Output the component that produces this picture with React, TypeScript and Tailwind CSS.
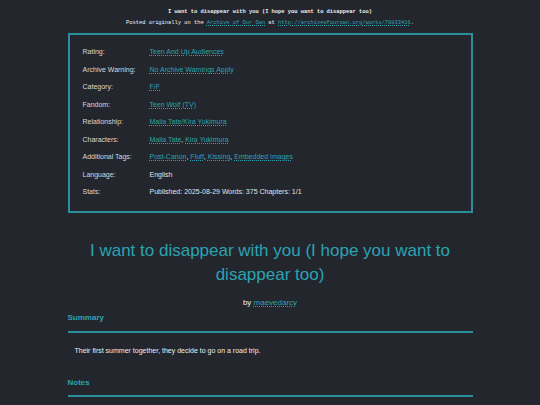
const TEAL = "text-[#2ba3b3]";

function Meta({ label, children }: { label: string; children: React.ReactNode }) {
  return (
    <>
      <dt className="text-[#d8d8d8]">{label}</dt>
      <dd className="text-[#e2e2e2]">{children}</dd>
    </>
  );
}

function Tag({ children }: { children: React.ReactNode }) {
  return <a className={`${TEAL} underline decoration-dotted underline-offset-1`}>{children}</a>;
}

export default function App() {
  return (
    <div
      className="min-h-[405px] w-[540px] bg-[#23262d] text-[#e2e2e2] overflow-hidden"
      style={{ fontFamily: '"Liberation Sans", Arial, sans-serif' }}
    >
      <div
        className="pt-[7px] text-center text-[5.4px] leading-[11px] text-[#f0f0f0]"
        style={{ fontFamily: '"Liberation Mono", "DejaVu Sans Mono", monospace' }}
      >
        <p className="font-bold">I want to disappear with you (I hope you want to disappear too)</p>
        <p>
          Posted originally on the <Tag>Archive of Our Own</Tag> at{" "}
          <Tag>http://archiveofourown.org/works/70833416</Tag>.
        </p>
      </div>

      <div className="mx-auto w-[405px]">
        <dl className="mt-[4px] grid grid-cols-[67px_1fr] border-2 border-[#2a8e9b] pl-[13px] pt-[8px] pb-[10px] text-[7px] leading-[17.5px]">
          <Meta label="Rating:"><Tag>Teen And Up Audiences</Tag></Meta>
          <Meta label="Archive Warning:"><Tag>No Archive Warnings Apply</Tag></Meta>
          <Meta label="Category:"><Tag>F/F</Tag></Meta>
          <Meta label="Fandom:"><Tag>Teen Wolf (TV)</Tag></Meta>
          <Meta label="Relationship:"><Tag>Malia Tate/Kira Yukimura</Tag></Meta>
          <Meta label="Characters:"><Tag>Malia Tate</Tag>, <Tag>Kira Yukimura</Tag></Meta>
          <Meta label="Additional Tags:">
            <Tag>Post-Canon</Tag>, <Tag>Fluff</Tag>, <Tag>Kissing</Tag>, <Tag>Embedded Images</Tag>
          </Meta>
          <Meta label="Language:">English</Meta>
          <Meta label="Stats:">Published: 2025-08-29 Words: 375 Chapters: 1/1</Meta>
        </dl>

        <h1 className={`mt-[26px] px-[8px] text-center text-[17px] leading-[24px] ${TEAL}`}>
          I want to disappear with you (I hope you want to disappear too)
        </h1>
        <p className="mt-[10px] text-center text-[8px] leading-[12px] text-[#f0f0f0]">
          by <Tag>maevedarcy</Tag>
        </p>

        <h2 className={`mt-[3px] border-b-2 border-[#2a8e9b] pb-[7px] text-[8px] font-bold leading-[12px] ${TEAL}`}>
          Summary
        </h2>
        <p className="pl-[7px] pt-[13px] text-[7px] leading-[10px] text-[#eeeeee]">
          Their first summer together, they decide to go on a road trip.
        </p>

        <h2 className={`mt-[21px] border-b-2 border-[#2a8e9b] pb-[6px] text-[8px] font-bold leading-[12px] ${TEAL}`}>
          Notes
        </h2>
      </div>
    </div>
  );
}
